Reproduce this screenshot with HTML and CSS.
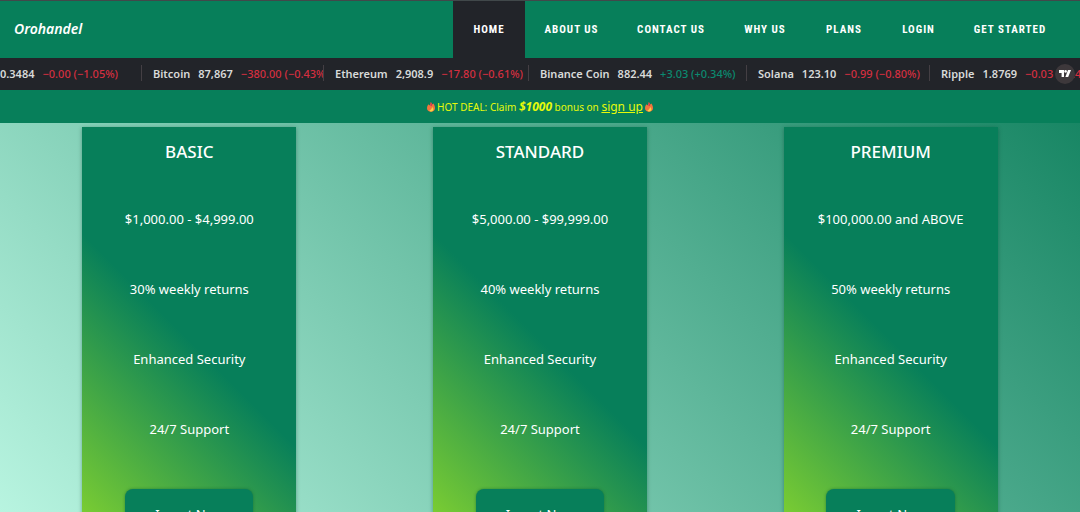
FILE: index.html
```html
<!DOCTYPE html>
<html lang="en">
<head>
<meta charset="utf-8">
<meta name="viewport" content="width=device-width, initial-scale=1">
<title>Orohandel</title>
<link rel="stylesheet" href="styles.css">
</head>
<body>
<header class="header">
  <a class="logo" href="#">Orohandel</a>
  <nav class="nav">
    <a class="active" href="#">HOME</a>
    <a href="#">ABOUT US</a>
    <a href="#">CONTACT US</a>
    <a href="#">WHY US</a>
    <a href="#">PLANS</a>
    <a href="#">LOGIN</a>
    <a href="#">GET STARTED</a>
  </nav>
</header>
<div class="ticker">
  <div class="quote first"><span>0.3484</span><span class="down">−0.00 (−1.05%)</span></div>
  <div class="quote btc"><b>Bitcoin</b><span>87,867</span><span class="down">−380.00 (−0.43%)</span></div>
  <div class="quote eth"><b>Ethereum</b><span>2,908.9</span><span class="down">−17.80 (−0.61%)</span></div>
  <div class="quote bnb"><b>Binance Coin</b><span>882.44</span><span class="up">+3.03 (+0.34%)</span></div>
  <div class="quote sol"><b>Solana</b><span>123.10</span><span class="down">−0.99 (−0.80%)</span></div>
  <div class="quote xrp"><b>Ripple</b><span>1.8769</span><span class="down">−0.03 (−1.40%)</span></div>
  <a class="badge" href="#" aria-label="TradingView">
    <svg width="12" height="8" viewBox="0 0 12 8" fill="#fff"><path d="M0 0h5v7H2.6V3H0z"/><circle cx="6.6" cy="1.4" r="1.3"/><path d="M9 0h3L9.2 7H6.4z"/></svg>
  </a>
</div>
<p class="deal">
  <svg class="flame" viewBox="0 0 10 12"><path fill="#f4753d" d="M4.5 0C6 1 6.500 2 6.500 3L8 1.500C9.500 3.500 10 5.500 10 7.500C10 10 8 12 5 12S0 10 0 7.500C0 5 1 3.500 2 2.500L3 4C4 3 4.600 1.500 4.500 0z"/><path fill="#d93651" d="M4.500 0C6 1 6.500 2 6.500 3L6 5L4 4C4.500 3 4.700 1.500 4.500 0z"/><path fill="#ffd043" d="M6.500 6C8 7.500 8.500 9 7.500 10.500C6.500 12 3.500 12 3 10C4.500 10 6 8.500 6.500 6z"/></svg>
  <span>HOT DEAL: Claim <strong>$1000</strong> bonus on <a href="#">sign up</a></span>
  <svg class="flame" viewBox="0 0 10 12"><path fill="#f4753d" d="M4.5 0C6 1 6.500 2 6.500 3L8 1.500C9.500 3.500 10 5.500 10 7.500C10 10 8 12 5 12S0 10 0 7.500C0 5 1 3.500 2 2.500L3 4C4 3 4.600 1.500 4.500 0z"/><path fill="#d93651" d="M4.500 0C6 1 6.500 2 6.500 3L6 5L4 4C4.500 3 4.700 1.500 4.500 0z"/><path fill="#ffd043" d="M6.500 6C8 7.500 8.500 9 7.500 10.500C6.500 12 3.500 12 3 10C4.500 10 6 8.500 6.500 6z"/></svg>
</p>
<main class="plans">
  <section class="card">
    <h2>BASIC</h2>
    <p>$1,000.00 - $4,999.00</p>
    <p>30% weekly returns</p>
    <p>Enhanced Security</p>
    <p>24/7 Support</p>
    <button type="button">Invest Now</button>
  </section>
  <section class="card">
    <h2>STANDARD</h2>
    <p>$5,000.00 - $99,999.00</p>
    <p>40% weekly returns</p>
    <p>Enhanced Security</p>
    <p>24/7 Support</p>
    <button type="button">Invest Now</button>
  </section>
  <section class="card">
    <h2>PREMIUM</h2>
    <p>$100,000.00 and ABOVE</p>
    <p>50% weekly returns</p>
    <p>Enhanced Security</p>
    <p>24/7 Support</p>
    <button type="button">Invest Now</button>
  </section>
</main>
</body>
</html>
```
FILE: styles.css
```css
* {
  box-sizing: border-box;
}

body {
  display: flex;
  flex-direction: column;
  height: 100vh;
  margin: 0;
  overflow: hidden;
  border-top: 1px solid #41484a;
  background: #077f5a;
  color: #fff;
  font-family: "Noto Sans", "Open Sans", sans-serif;
  font-size: 13px;
}

.header {
  display: flex;
  flex: none;
  justify-content: space-between;
  height: 57px;
  padding: 0 15px 0 14px;
}

.logo {
  align-self: center;
  padding-bottom: 2px;
  color: #fff;
  font-size: 14px;
  font-style: italic;
  font-weight: 600;
  text-decoration: none;
}

.nav {
  display: grid;
  flex: 0 1 612px;
  grid-template-columns: 72fr 93fr 106fr 82fr 76fr 73fr 110fr;
}

.nav a {
  display: flex;
  align-items: center;
  justify-content: center;
  color: #fff;
  font-family: "Liberation Sans Narrow", "Roboto Condensed", Roboto, sans-serif;
  font-size: 11px;
  font-weight: 700;
  letter-spacing: 1px;
  text-decoration: none;
  white-space: nowrap;
}

.nav .active {
  background: #222429;
}

.ticker {
  position: relative;
  display: flex;
  flex: none;
  height: 32px;
  padding-bottom: 2px;
  align-items: center;
  overflow: hidden;
  background: #222429;
  color: #d8dad9;
  font-size: 11px;
  font-weight: 600;
}

.quote {
  display: flex;
  flex: none;
  gap: 8px;
  height: 16px;
  padding-left: 11px;
  align-items: center;
  overflow: hidden;
  border-left: 1px solid #443f44;
  white-space: nowrap;
}

.quote b {
  font-weight: 600;
}

.first {
  width: 141px;
  padding-left: 0;
  border-left: 0;
}

.btc {
  width: 182px;
}

.eth {
  width: 205px;
}

.bnb {
  width: 218px;
}

.sol {
  width: 183px;
}

.down {
  color: #d42f40;
  font-weight: 500;
}

.up {
  color: #0b8a70;
  font-weight: 500;
}

.badge {
  position: absolute;
  top: 6px;
  right: 5px;
  display: flex;
  width: 20px;
  height: 20px;
  align-items: center;
  justify-content: center;
  border-radius: 50%;
  background: #3d383b;
}

.deal {
  display: flex;
  flex: none;
  gap: 2px;
  height: 33px;
  margin: 0;
  align-items: center;
  justify-content: center;
  color: #e6fa0a;
  font-size: 10px;
}

.deal strong {
  font-size: 12px;
  font-style: italic;
}

.deal a {
  color: inherit;
  font-size: 12px;
}

.flame {
  width: 8px;
  height: 10px;
}

.plans {
  display: grid;
  flex: 1;
  grid-template-columns: repeat(3, 1fr);
  min-height: 0;
  padding: 4px 14px 0;
  align-items: start;
  justify-items: center;
  overflow: hidden;
  background: linear-gradient(45deg, #b8f4e0, #188664);
}

.card {
  display: flex;
  flex-direction: column;
  width: 61%;
  padding: 13px 0 14px;
  align-items: center;
  background: linear-gradient(45deg, #8ad72d, #077f5a 50%);
  box-shadow: 0 1px 4px rgba(0, 60, 40, 0.4);
  text-align: center;
}

.card h2 {
  margin: 0 0 45px;
  font-size: 17px;
  font-weight: 500;
  line-height: 24px;
}

.card p {
  margin: 0 0 50px;
  line-height: 20px;
}

.card button {
  width: 60%;
  height: 50px;
  padding: 0;
  border: 0;
  border-radius: 8px;
  background: #077f5a;
  box-shadow: 0 0 3px rgba(0, 80, 50, 0.5);
  color: #fff;
  font: inherit;
}
```
